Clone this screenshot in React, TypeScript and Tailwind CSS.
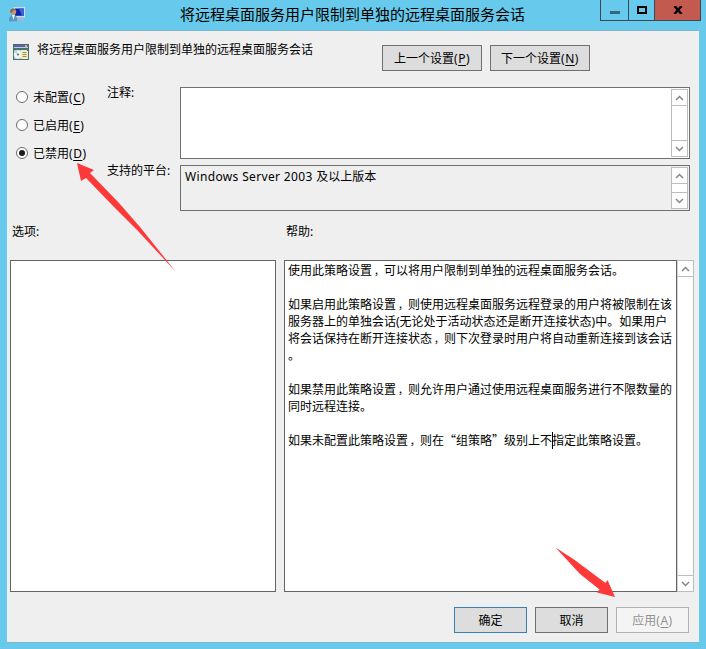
import React, { useState } from "react";

interface OptionProps {
  label: string;
  hotkey: string;
  checked: boolean;
  onSelect: () => void;
}

interface DialogButtonProps {
  className: string;
  children: React.ReactNode;
  disabled?: boolean;
}

const options = [
  { id: "none", label: "未配置", hotkey: "C" },
  { id: "enabled", label: "已启用", hotkey: "E" },
  { id: "disabled", label: "已禁用", hotkey: "D" },
];

const helpBefore = [
  "使用此策略设置，可以将用户限制到单独的远程桌面服务会话。",
  "",
  "如果启用此策略设置，则使用远程桌面服务远程登录的用户将被限制在该",
  "服务器上的单独会话(无论处于活动状态还是断开连接状态)中。如果用户",
  "将会话保持在断开连接状态，则下次登录时用户将自动重新连接到该会话",
  "。",
  "",
  "如果禁用此策略设置，则允许用户通过使用远程桌面服务进行不限数量的",
  "同时远程连接。",
  "",
];

function Hotkey({ k }: { k: string }) {
  return (
    <span className="tracking-[0.5px]">
      (<span className="underline underline-offset-2">{k}</span>)
    </span>
  );
}

// Commas sit in the middle of their cell, quotes take a full cell
function HelpText({ text }: { text: string }) {
  return (
    <>
      {text.split(/([，“”])/).map((part, i) => {
        if (part === "，") {
          return (
            <span key={i} className="inline-block w-3 pl-[2px] text-[10px] leading-none">
              {part}
            </span>
          );
        }
        if (part === "“" || part === "”") {
          return (
            <span key={i} className="font-['Noto_Sans_CJK_SC',sans-serif] leading-none">
              {part}
            </span>
          );
        }
        return <span key={i}>{part}</span>;
      })}
    </>
  );
}

function Option({ label, hotkey, checked, onSelect }: OptionProps) {
  return (
    <button className="flex h-7 items-center" onClick={onSelect}>
      <svg width="12" height="12" viewBox="0 0 12 12" className="mr-[5px]">
        <circle cx="6" cy="6" r="5.5" fill="#fff" stroke="#6b6b6b" />
        {checked && <circle cx="6" cy="6" r="3" fill="#1c1c1c" />}
      </svg>
      <span>
        {label}
        <Hotkey k={hotkey} />
      </span>
    </button>
  );
}

function DialogButton({ className, children, disabled }: DialogButtonProps) {
  return (
    <button
      disabled={disabled}
      className={`flex h-[26px] items-center justify-center border ${className}`}
    >
      {children}
    </button>
  );
}

function Chevron({ down }: { down?: boolean }) {
  return (
    <svg width="9" height="6" viewBox="0 0 9 6" fill="none" stroke="#868686" strokeWidth="1.5">
      <path d={down ? "M1 1l3.5 3.5L8 1" : "M1 5l3.5-3.5L8 5"} />
    </svg>
  );
}

function ScrollBar({ className }: { className: string }) {
  return (
    <div className={`flex shrink-0 flex-col justify-between border border-[#bdbdbd] bg-white ${className}`}>
      <div className="flex h-4 items-center justify-center border-b border-[#bdbdbd]">
        <Chevron />
      </div>
      <div className="flex h-4 items-center justify-center border-t border-[#bdbdbd]">
        <Chevron down />
      </div>
    </div>
  );
}

function RemoteIcon() {
  return (
    <svg width="17" height="16" viewBox="0 0 17 16">
      <path d="M4.5 0H16v10.5H4.5z" fill="#d3dbe6" />
      <path d="M6 1.5h8.8v7.3H6z" fill="#0a23a8" />
      <path d="M10 1.5h4.8v7.3h-2z" fill="#3c62dc" />
      <path d="M9 10.5h4V12H9zM8 12h7v1.6H8z" fill="#a9b6cb" />
      <circle cx="4.2" cy="4.8" r="3" fill="#c49a72" />
      <path d="M1.2 5.4C.8 1 6 .6 7 3.2L4 3.6 2.6 6z" fill="#7b6a58" />
      <path d="M0 14.2c0-4 1.5-6.4 4.2-6.4s4 2.4 4 6.4z" fill="#5b94c8" />
      <path d="M3 7.9h2.8L4.6 13z" fill="#edf5fb" />
    </svg>
  );
}

function PolicyIcon() {
  return (
    <svg width="16" height="16" viewBox="0 0 16 16">
      <path d="M0 0h16v16H0z" fill="#3f7676" />
      <path d="M0 0h16v1H0z" fill="#5d5f66" />
      <path d="M1 1h14v2H1z" fill="#5a62b4" />
      <path d="M12 1h2v2h-2z" fill="#e0b850" />
      <path d="M1 3h14v1H1z" fill="#b9cbe4" />
      <path d="M1 6h7v9H1z" fill="#aebfbb" />
      <circle cx="5" cy="10.5" r="4.2" fill="#f2f3f3" />
      <path d="M5 10.5L1.5 8.5A4 4 0 0 1 4 6.4z" fill="#c4dcc8" />
      <circle cx="5" cy="10.5" r="1.1" fill="#67787d" />
      <path d="M8 6h6v1h1v8H8z" fill="#f5ecc0" />
      <path d="M9.5 8.5h4M9.5 10.5h4M9.5 12.5h4" stroke="#a18c4a" />
    </svg>
  );
}

export default function App() {
  const [selected, setSelected] = useState("disabled");

  return (
    <div className="relative flex h-[649px] w-[706px] flex-col bg-[#67c9eb] px-[7px] pb-1.5 font-['Noto_Sans','Noto_Sans_CJK_SC',sans-serif] text-xs leading-[17px] text-black">
      <div className="flex h-[30px] shrink-0">
        <div className="w-[173px] shrink-0 pt-[7px] pl-0.5">
          <RemoteIcon />
        </div>
        <h1 className="w-[420px] shrink-0 pt-1 text-[15px] leading-[20px]">
          将远程桌面服务用户限制到单独的远程桌面服务会话
        </h1>
        <div className="flex h-[21px] w-[101px] shrink-0 border border-t-0 border-[#3b4a50]">
          <button className="flex w-[27px] justify-center pt-[11px]">
            <span className="h-[3px] w-2.5 bg-[#35687a]" />
          </button>
          <button className="flex w-[27px] justify-center border-x border-[#3b4a50] pt-1.5">
            <span className="h-2 w-2.5 border-2 border-black" />
          </button>
          <button className="flex flex-1 justify-center bg-[#c25a50] pt-1.5">
            <svg width="10" height="8" viewBox="0 0 10 8" stroke="#000" strokeWidth="2.4">
              <path d="M1.5 0l7 8M8.5 0l-7 8" />
            </svg>
          </button>
        </div>
      </div>

      <div className="flex flex-1 flex-col border-t border-b border-t-[#82b6c9] border-b-[#82b6c9] bg-[#efefef]">
        <div className="flex h-14 shrink-0 pl-1.5">
          <div className="w-6 pt-[13px]">
            <PolicyIcon />
          </div>
          <div className="w-[345px] pt-2.5">将远程桌面服务用户限制到单独的远程桌面服务会话</div>
          <div className="flex gap-2 pt-3.5">
            <DialogButton className="w-[100px] border-[#707070] bg-[#dddddd]">
              <span>
                上一个设置
                <Hotkey k="P" />
              </span>
            </DialogButton>
            <DialogButton className="w-[100px] border-[#707070] bg-[#dddddd]">
              <span>
                下一个设置
                <Hotkey k="N" />
              </span>
            </DialogButton>
          </div>
        </div>

        <div className="flex h-[124px] shrink-0">
          <div className="-mt-1 flex w-[100px] flex-col pl-[9px]">
            {options.map((o) => (
              <Option
                key={o.id}
                label={o.label}
                hotkey={o.hotkey}
                checked={selected === o.id}
                onSelect={() => setSelected(o.id)}
              />
            ))}
          </div>
          <div className="w-[73px]">
            <div className="-mt-[3px] h-[78px]">注释:</div>
            <div>支持的平台:</div>
          </div>
          <div className="flex w-[510px] flex-col gap-1.5">
            <div className="flex h-[72px] justify-end border border-[#707070] bg-white p-px">
              <ScrollBar className="w-[17px]" />
            </div>
            <div className="flex h-[46px] justify-between border border-[#707070] p-px">
              <div className="pt-px pl-[3px]">
                <span className="tracking-[0.35px]">Windows Server 2003 </span>
                及以上版本
              </div>
              <ScrollBar className="w-[17px]" />
            </div>
          </div>
        </div>

        <div className="flex h-[49px] shrink-0 pt-3 pl-[5px]">
          <div className="w-[274px]">选项:</div>
          <div>帮助:</div>
        </div>

        <div className="flex h-[332px] shrink-0 pl-[3px]">
          <div className="mr-2 w-[266px] border border-[#646464] bg-white" />
          <div className="w-[393px] border border-[#646464] bg-white pt-px pl-[3px] whitespace-nowrap">
            {helpBefore.map((line, i) => (
              <div key={i} className="h-[17px]">
                <HelpText text={line} />
              </div>
            ))}
            <div className="flex h-[17px]">
              <div>
                <HelpText text="如果未配置此策略设置，则在“组策略”级别上不" />
              </div>
              <div className="-mr-px h-[17px] w-px bg-black" />
              <div>指定此策略设置。</div>
            </div>
          </div>
          <ScrollBar className="w-[17px] border-l-[#d0d0d0]" />
        </div>

        <div className="flex gap-2 pt-[15px] pl-[447px]">
          <DialogButton className="w-[73px] border-[#3c7fb1] bg-[#dddddd]">确定</DialogButton>
          <DialogButton className="w-[73px] border-[#707070] bg-[#dddddd]">取消</DialogButton>
          <DialogButton className="w-[73px] border-[#adb2b5] bg-[#f4f4f4] text-[#929292]" disabled>
            <span>
              应用
              <Hotkey k="A" />
            </span>
          </DialogButton>
        </div>
      </div>

      {/* Pointer arrows laid over the dialog */}
      <svg
        className="pointer-events-none absolute top-0 left-0"
        width="706"
        height="649"
        viewBox="0 0 706 649"
        fill="#fd3a39"
      >
        <path d="M77 163L94 170L90 173L119 203L140 227L176 272L138 231L114 207L86 178L81 181Z" />
        <path d="M555.5 547.5L574 559.5L605.5 583L607.5 580L615 597L597 592.5L599.5 589.5L580 574Z" />
      </svg>
    </div>
  );
}
